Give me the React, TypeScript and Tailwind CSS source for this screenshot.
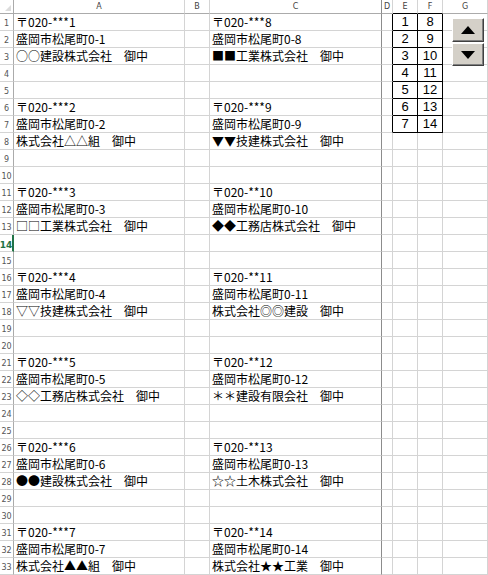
import React from "react";

const colLetters = ["", "A", "B", "C", "D", "E", "F", "G"];

const aNames = [
  "○○建設株式会社　御中",
  "株式会社△△組　御中",
  "□□工業株式会社　御中",
  "▽▽技建株式会社　御中",
  "◇◇工務店株式会社　御中",
  "●●建設株式会社　御中",
  "株式会社▲▲組　御中",
];
const cNames = [
  "■■工業株式会社　御中",
  "▼▼技建株式会社　御中",
  "◆◆工務店株式会社　御中",
  "株式会社◎◎建設　御中",
  "＊＊建設有限会社　御中",
  "☆☆土木株式会社　御中",
  "株式会社★★工業　御中",
];

function postal(k: number) {
  return k < 10 ? `〒020-***${k}` : `〒020-**${k}`;
}

function textFor(row: number, col: number): string {
  const block = Math.floor((row - 1) / 5);
  const line = (row - 1) % 5;
  if (block > 6 || line > 2) return "";
  if (col === 1) {
    const k = block + 1;
    return line === 0 ? postal(k) : line === 1 ? `盛岡市松尾町0-${k}` : aNames[block];
  }
  if (col === 3) {
    const k = block + 8;
    return line === 0 ? postal(k) : line === 1 ? `盛岡市松尾町0-${k}` : cNames[block];
  }
  return "";
}

const font = { fontFamily: '"Noto Sans CJK JP", "Noto Sans", sans-serif' };

export default function App() {
  const rows = Array.from({ length: 33 }, (_, i) => i + 1);
  return (
    <div className="relative w-[488px] h-[575px] overflow-hidden bg-white" style={font}>
      <div className="grid grid-cols-[14px_171px_25px_172px_11px_25px_25px_45px] auto-rows-[17px] [grid-template-rows:14px]">
        {colLetters.map((c, i) => {
          let cls = "h-[14px] flex items-center justify-center text-[8px] text-[#444] border-b ";
          cls += i === 5 || i === 6 ? "border-b-black " : "border-b-[#ababab] ";
          if (i === 0) cls += "border-r border-r-[#ababab] relative";
          else if (i === 3) cls += "border-r border-r-[#8c8c8c]";
          else cls += "border-r border-r-[#d4d4d4]";
          return (
            <div key={"h" + i} className={cls} style={{ fontFamily: '"DejaVu Sans", sans-serif' }}>
              {i === 0 ? (
                <svg className="absolute right-[2px] bottom-[2px]" width="6" height="6" viewBox="0 0 6 6">
                  <polygon points="6,0 6,6 0,6" fill="#dcdcdc" />
                </svg>
              ) : (
                c
              )}
            </div>
          );
        })}
        {rows.map((r) => (
          <React.Fragment key={r}>
            <div
              className={
                r === 14
                  ? "h-[17px] flex items-end justify-center pb-[1px] text-[9px] leading-[10px] font-bold text-[#217346] border-b border-b-[#d4d4d4] border-r-2 border-r-[#217346]"
                  : "h-[17px] flex items-end justify-center pb-[1px] text-[8px] leading-[10px] text-[#555] border-b border-b-[#d4d4d4] border-r border-r-[#ababab]"
              }
              style={{ fontFamily: '"DejaVu Sans", sans-serif' }}
            >
              {r}
            </div>
            <div className="h-[17px] flex items-end pl-[2px] pb-[1px] text-[12px] leading-[14px] text-black whitespace-nowrap border-b border-b-[#d4d4d4] border-r border-r-[#d4d4d4]">
              {textFor(r, 1)}
            </div>
            <div className="h-[17px] border-b border-b-[#d4d4d4] border-r border-r-[#d4d4d4]" />
            <div className="h-[17px] flex items-end pl-[2px] pb-[1px] text-[12px] leading-[14px] text-black whitespace-nowrap border-b border-b-[#d4d4d4] border-r border-r-[#8c8c8c]">
              {textFor(r, 3)}
            </div>
            <div
              className={
                r <= 7
                  ? "h-[17px] border-b border-b-[#d4d4d4] border-r border-r-black"
                  : "h-[17px] border-b border-b-[#d4d4d4] border-r border-r-[#d4d4d4]"
              }
            />
            {r <= 7 ? (
              <>
                <div className="h-[17px] flex items-center justify-center text-[13px] leading-[14px] text-black border-b border-b-black border-r border-r-black" style={{ fontFamily: '"Liberation Sans", sans-serif' }}>
                  {r}
                </div>
                <div className="h-[17px] flex items-center justify-center text-[13px] leading-[14px] text-black border-b border-b-black border-r border-r-black" style={{ fontFamily: '"Liberation Sans", sans-serif' }}>
                  {r + 7}
                </div>
              </>
            ) : (
              <>
                <div className="h-[17px] border-b border-b-[#d4d4d4] border-r border-r-[#d4d4d4]" />
                <div className="h-[17px] border-b border-b-[#d4d4d4] border-r border-r-[#d4d4d4]" />
              </>
            )}
            <div className="h-[17px] border-b border-b-[#d4d4d4] border-r border-r-[#d4d4d4]" />
          </React.Fragment>
        ))}
      </div>

      <div className="absolute left-[452px] top-[18px] w-[32px] flex flex-col gap-[1px]">
        <div className="h-[24px] bg-[#d4d0c8] border border-t-white border-l-white border-r-[#404040] border-b-[#404040] flex items-center justify-center shadow-[inset_-1px_-1px_0_#808080]">
          <svg width="14" height="8" viewBox="0 0 14 8">
            <polygon points="7,0 14,8 0,8" fill="black" />
          </svg>
        </div>
        <div className="h-[23px] bg-[#d4d0c8] border border-t-white border-l-white border-r-[#404040] border-b-[#404040] flex items-center justify-center shadow-[inset_-1px_-1px_0_#808080]">
          <svg width="14" height="8" viewBox="0 0 14 8">
            <polygon points="0,0 14,0 7,8" fill="black" />
          </svg>
        </div>
      </div>
    </div>
  );
}
